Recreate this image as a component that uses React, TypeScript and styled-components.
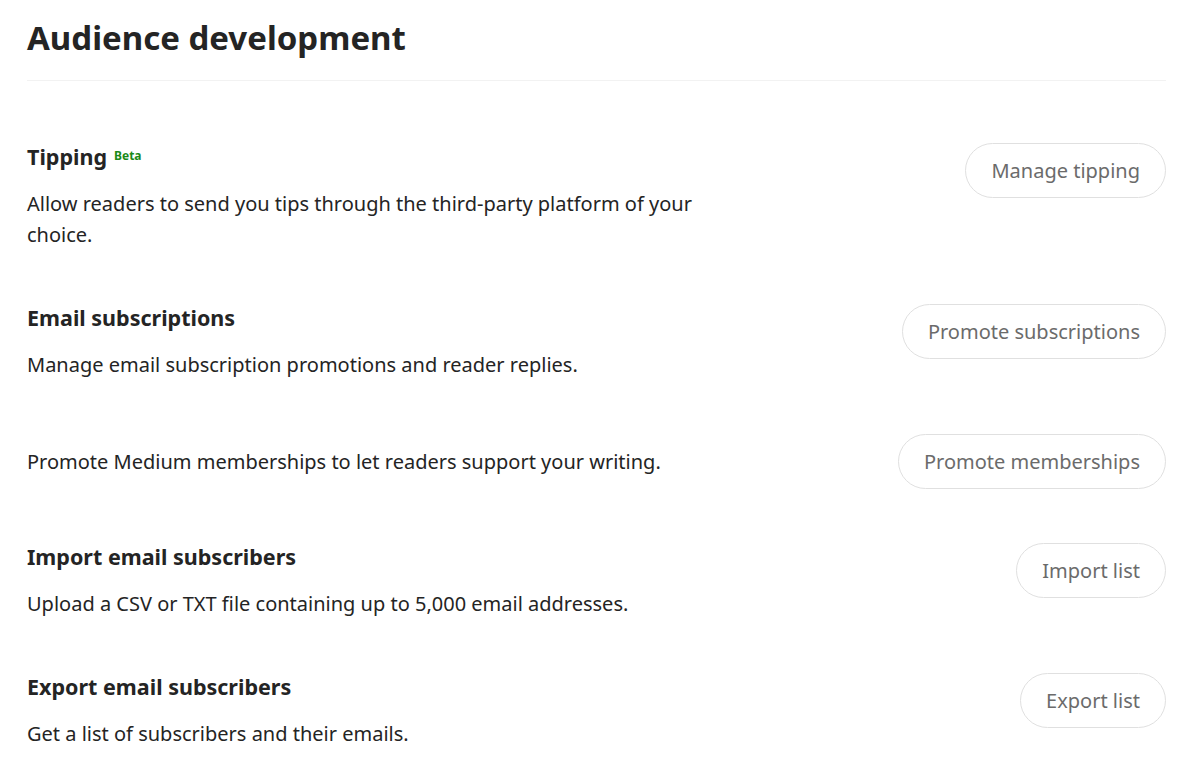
import styled, { createGlobalStyle } from "styled-components";

const GlobalStyle = createGlobalStyle`
  body {
    margin: 0;
    background: #ffffff;
    font-family: "Noto Sans", "Open Sans", sans-serif;
    color: #242424;
  }
`;

const Page = styled.div`
  padding: 0 34px 0 27px;
`;

const Header = styled.div`
  padding-top: 16px;
  padding-bottom: 20px;
  border-bottom: 1px solid #f2f2f2;
`;

const Heading = styled.h1`
  margin: 0;
  font-size: 33px;
  line-height: 44px;
  font-weight: 700;
  letter-spacing: 0;
`;

const List = styled.div`
  display: flex;
  flex-direction: column;
  gap: 54px;
  padding-top: 62px;
`;

const Row = styled.div<{ $center?: boolean }>`
  display: flex;
  justify-content: space-between;
  align-items: ${(p) => (p.$center ? "center" : "flex-start")};
  gap: 40px;
`;

const Text = styled.div`
  max-width: 700px;
`;

const Title = styled.h2`
  margin: 0 0 17px;
  font-size: 21.5px;
  line-height: 28px;
  font-weight: 700;
  display: flex;
  align-items: center;
  gap: 7px;
`;

const Badge = styled.span`
  font-size: 12px;
  line-height: 14px;
  font-weight: 700;
  color: #1a8917;
  margin-top: -3px;
`;

const Desc = styled.p`
  margin: 0;
  font-size: 20px;
  line-height: 31px;
  color: #242424;
`;

const Button = styled.button`
  flex-shrink: 0;
  height: 55px;
  padding: 0 25px;
  border: 1px solid #e0e0e0;
  border-radius: 28px;
  background: #ffffff;
  color: #6b6b6b;
  font-family: inherit;
  font-size: 20px;
  cursor: pointer;
`;

type Item = {
  title?: string;
  beta?: boolean;
  desc: string;
  action: string;
};

const items: Item[] = [
  {
    title: "Tipping",
    beta: true,
    desc: "Allow readers to send you tips through the third-party platform of your choice.",
    action: "Manage tipping",
  },
  {
    title: "Email subscriptions",
    desc: "Manage email subscription promotions and reader replies.",
    action: "Promote subscriptions",
  },
  {
    desc: "Promote Medium memberships to let readers support your writing.",
    action: "Promote memberships",
  },
  {
    title: "Import email subscribers",
    desc: "Upload a CSV or TXT file containing up to 5,000 email addresses.",
    action: "Import list",
  },
  {
    title: "Export email subscribers",
    desc: "Get a list of subscribers and their emails.",
    action: "Export list",
  },
];

export default function App() {
  return (
    <>
      <GlobalStyle />
      <Page>
        <Header>
          <Heading>Audience development</Heading>
        </Header>
        <List>
          {items.map((item) => (
            <Row key={item.action} $center={!item.title}>
              <Text>
                {item.title && (
                  <Title>
                    {item.title}
                    {item.beta && <Badge>Beta</Badge>}
                  </Title>
                )}
                <Desc>{item.desc}</Desc>
              </Text>
              <Button>{item.action}</Button>
            </Row>
          ))}
        </List>
      </Page>
    </>
  );
}
